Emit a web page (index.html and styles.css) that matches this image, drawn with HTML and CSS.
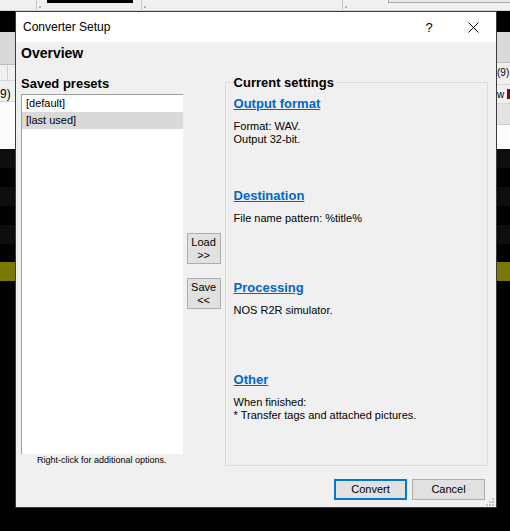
FILE: index.html
```html
<!DOCTYPE html>
<html>
<head>
<meta charset="utf-8">
<title>Converter Setup</title>
<link rel="stylesheet" href="styles.css">
</head>
<body>
<div class="desktop">
  <div class="toolbar">
    <div class="tb-band tb-1"></div>
    <div class="tb-band tb-2"><span class="grip"></span><span class="tb-black"></span></div>
    <div class="tb-band tb-3"><span class="grip"></span></div>
    <div class="tb-band tb-4"><span class="grip"></span><span class="tb-box"></span></div>
  </div>
  <div class="app">
    <div class="strip strip-left">
      <div class="row r-black h21"></div>
      <div class="row r-head h33"></div>
      <div class="row r-light h16"><span class="vline"></span></div>
      <div class="row r-light h21 txt-bottom">9)</div>
      <div class="row r-white h47"></div>
      <div class="row r-dark h19"></div>
      <div class="row r-black h19"></div>
      <div class="row r-dark h19"></div>
      <div class="row r-black h19"></div>
      <div class="row r-dark h19"></div>
      <div class="row r-black h18"></div>
      <div class="row r-olive h19"></div>
    </div>
    <div class="strip strip-right">
      <div class="row r-black h21"></div>
      <div class="row r-head h31"></div>
      <div class="row r-light h22 txt">(9)</div>
      <div class="row r-light h19 txt">w <span class="maroon"></span></div>
      <div class="row r-mid h21"></div>
      <div class="row r-white h24"></div>
      <div class="row r-dark h19"></div>
      <div class="row r-black h19"></div>
      <div class="row r-dark h19"></div>
      <div class="row r-black h19"></div>
      <div class="row r-dark h19"></div>
      <div class="row r-black h18"></div>
      <div class="row r-olive h19"></div>
    </div>
  </div>
</div>

<div class="dialog">
  <div class="titlebar">
    <div class="title">Converter Setup</div>
    <div class="tbtn help">?</div>
    <div class="tbtn close">
      <svg width="11" height="11" viewBox="0 0 11 11"><path d="M0.5 0.5 L10.5 10.5 M10.5 0.5 L0.5 10.5" stroke="#000" stroke-width="1" fill="none"/></svg>
    </div>
  </div>
  <div class="body">
    <div class="overview">Overview</div>
    <div class="main">
      <div class="left-col">
        <div class="label">Saved presets</div>
        <div class="listbox">
          <div class="item">[default]</div>
          <div class="item selected">[last used]</div>
        </div>
        <div class="hint">Right-click for additional options.</div>
      </div>
      <div class="mid-col">
        <div class="btn small">Load<br>&gt;&gt;</div>
        <div class="btn small">Save<br>&lt;&lt;</div>
      </div>
      <fieldset class="group">
        <legend>Current settings</legend>
        <div class="section">
          <a class="link">Output format</a>
          <div class="desc">Format: WAV.<br>Output 32-bit.</div>
        </div>
        <div class="section">
          <a class="link">Destination</a>
          <div class="desc">File name pattern: %title%</div>
        </div>
        <div class="section">
          <a class="link">Processing</a>
          <div class="desc">NOS R2R simulator.</div>
        </div>
        <div class="section">
          <a class="link">Other</a>
          <div class="desc">When finished:<br>* Transfer tags and attached pictures.</div>
        </div>
      </fieldset>
    </div>
    <div class="footer">
      <div class="btn wide default">Convert</div>
      <div class="btn wide">Cancel</div>
    </div>
  </div>
  <svg class="sizegrip" width="8" height="8" viewBox="0 0 8 8">
    <rect x="6" y="0" width="2" height="2" fill="#c4c4c4"/>
    <rect x="3" y="3" width="2" height="2" fill="#c4c4c4"/>
    <rect x="6" y="3" width="2" height="2" fill="#c4c4c4"/>
    <rect x="0" y="6" width="2" height="2" fill="#c4c4c4"/>
    <rect x="3" y="6" width="2" height="2" fill="#c4c4c4"/>
    <rect x="6" y="6" width="2" height="2" fill="#c4c4c4"/>
  </svg>
</div>
</body>
</html>
```
FILE: styles.css
```css
html, body {
  margin: 0;
  padding: 0;
}
body {
  background: #000;
  width: 510px;
  height: 531px;
  overflow: hidden;
  position: relative;
  font-family: "Liberation Sans", Arial, sans-serif;
}

/* background application */
.toolbar {
  height: 10px;
  background: #f0f0f0;
  border-bottom: 1px solid #d4d4d4;
  display: flex;
}
.tb-band {
  height: 10px;
  border-right: 1px solid #c8c8c8;
  box-sizing: border-box;
  display: flex;
  align-items: flex-start;
}
.tb-1 { width: 37px; }
.tb-2 { width: 105px; }
.tb-3 { width: 201px; }
.tb-4 { flex: 1; border-right: none; }
.grip {
  width: 2px;
  height: 2px;
  margin: 6px 0 0 2px;
  background: #b4b4b4;
}
.tb-black {
  width: 86px;
  height: 3px;
  margin-left: 6px;
  background: #000;
}
.tb-box {
  margin-left: 41px;
  flex: 1;
  height: 2px;
  border: 1px solid #a8a8a8;
  border-top: none;
  border-right: none;
  background: #e8e8e8;
}
.app {
  display: flex;
  justify-content: space-between;
}
.strip {
  display: flex;
  flex-direction: column;
  overflow: hidden;
  font-size: 12px;
  color: #000;
}
.strip-left { width: 15px; }
.strip-right { width: 13px; font-size: 10px; }
.row { box-sizing: border-box; white-space: nowrap; position: relative; }
.h16 { height: 16px; }
.h18 { height: 18px; }
.h19 { height: 19px; }
.h21 { height: 21px; }
.h22 { height: 22px; }
.h24 { height: 24px; }
.h31 { height: 31px; }
.h33 { height: 33px; }
.h47 { height: 47px; }
.r-black { background: #000; }
.r-dark { background: #0d0d0d; }
.r-head { background: #d9d9d9; border-bottom: 1px solid #bdbdbd; }
.r-light { background: #f0f0f0; border-bottom: 1px solid #d6d6d6; }
.r-mid { background: #e3e3e3; border-bottom: 1px solid #cfcfcf; }
.r-white { background: #fbfbfb; }
.r-olive { background: #7a7800; }
.vline {
  display: block;
  width: 1px;
  height: 100%;
  margin-left: 7px;
  background: #d0d0d0;
}
.txt { line-height: 20px; }
.txt-bottom { line-height: 14px; padding-top: 6px; }
.maroon {
  display: inline-block;
  width: 3px;
  height: 10px;
  background: #6e0f0f;
  vertical-align: -1px;
}

/* dialog window */
.dialog {
  position: absolute;
  left: 15px;
  top: 11px;
  width: 480px;
  height: 495px;
  border: 1px solid #3a3a3a;
  background: #f0f0f0;
  display: flex;
  flex-direction: column;
  color: #000;
}
.titlebar {
  height: 30px;
  background: #fff;
  display: flex;
  align-items: center;
}
.title {
  flex: 1;
  padding-left: 7px;
  font-size: 12px;
}
.tbtn {
  width: 46px;
  height: 30px;
  display: flex;
  align-items: center;
  justify-content: center;
}
.help {
  font-size: 13px;
  padding-left: 4px;
  box-sizing: border-box;
}
.body {
  flex: 1;
  padding: 3px 8px 0 5px;
  display: flex;
  flex-direction: column;
}
.overview {
  font-weight: bold;
  font-size: 14px;
  line-height: 16px;
}
.main {
  margin-top: 15px;
  height: 390px;
  display: flex;
  gap: 4px;
}
.left-col {
  width: 162px;
  display: flex;
  flex-direction: column;
}
.label {
  font-weight: bold;
  font-size: 13px;
  line-height: 15px;
}
.listbox {
  margin-top: 3px;
  height: 360px;
  box-sizing: border-box;
  background: #fff;
  border-left: 1px solid #a0a0a0;
  border-top: 1px solid #a0a0a0;
}
.item {
  height: 17px;
  line-height: 17px;
  padding-left: 4px;
  font-size: 11px;
}
.item.selected { background: #d9d9d9; }
.hint {
  margin-top: 1px;
  font-size: 9px;
  line-height: 11px;
  text-align: center;
}
.mid-col {
  width: 34px;
  display: flex;
  flex-direction: column;
  justify-content: center;
  gap: 14px;
}
.btn {
  box-sizing: border-box;
  background: #e1e1e1;
  border: 1px solid #adadad;
  text-align: center;
  font-size: 11px;
}
.btn.small {
  height: 31px;
  line-height: 13px;
  padding-top: 2px;
}
.group {
  margin: -1px 0 0 0;
  width: 264px;
  box-sizing: border-box;
  border: 1px solid #dcdcdc;
  padding: 6px 8px 1px;
  min-width: 0;
}
.group legend {
  font-weight: bold;
  font-size: 13px;
  line-height: 15px;
  padding: 0 2px 0 0;
}
.section {
  height: 92px;
}
.link {
  display: block;
  font-weight: bold;
  font-size: 13px;
  line-height: 15px;
  color: #0066cc;
  text-decoration: underline;
  width: max-content;
}
.desc {
  margin-top: 9px;
  font-size: 11px;
  line-height: 13px;
}
.footer {
  margin-top: 13px;
  padding-right: 3px;
  display: flex;
  justify-content: flex-end;
  gap: 5px;
}
.btn.wide {
  width: 73px;
  height: 21px;
  line-height: 19px;
}
.btn.default {
  border: 2px solid #0078d7;
  line-height: 17px;
}
.sizegrip {
  position: absolute;
  right: 2px;
  bottom: 1px;
}
```
